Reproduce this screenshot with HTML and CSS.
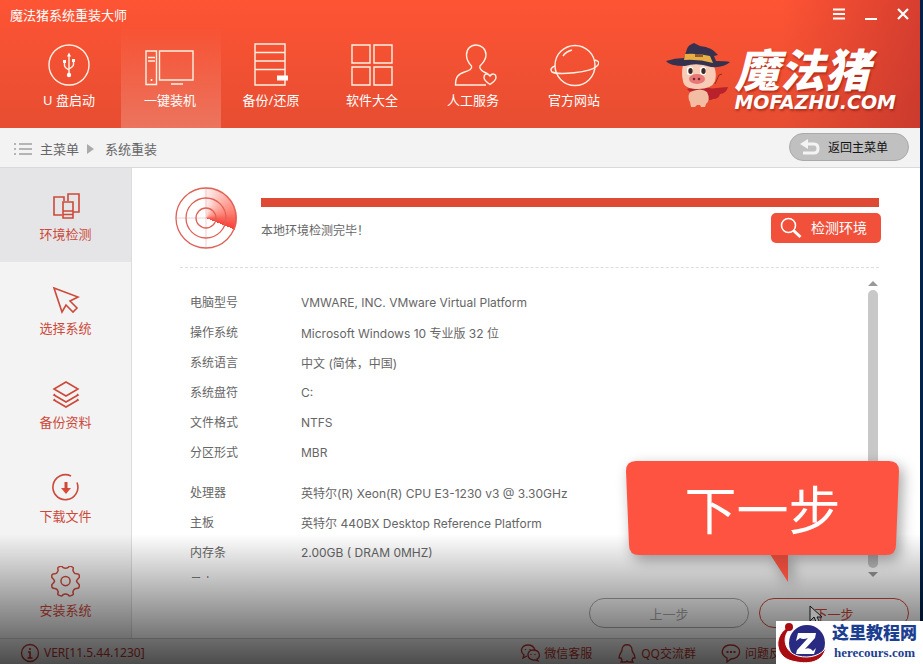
FILE: index.html
```html
<!DOCTYPE html>
<html lang="zh-CN">
<head>
    <meta charset="UTF-8">
    <meta name="viewport" content="width=device-width, initial-scale=1.0">
    <title>魔法猪系统重装大师</title>
    <link rel="stylesheet" href="styles.css">
</head>
<body>
<div class="window">

    <header class="header">
        <div class="titlebar">
            <span class="title">魔法猪系统重装大师</span>
            <div class="window-buttons">
                <button type="button" aria-label="菜单"><svg width="12" height="12" viewBox="0 0 12 12"><path d="M0 1.500h12M0 6h12M0 10.500h12" stroke-width="2"/></svg></button>
                <button type="button" aria-label="最小化"><svg width="12" height="12" viewBox="0 0 12 12"><path d="M0 11h12" stroke-width="2"/></svg></button>
                <button type="button" aria-label="关闭"><svg width="12" height="12" viewBox="0 0 12 12"><path d="M1 1l10 10M11 1L1 11" stroke-width="2.200"/></svg></button>
            </div>
        </div>
        <div class="header-main">
            <nav class="nav">
                <a href="#">
                    <svg width="50" height="44" viewBox="0 0 50 44"><circle cx="25" cy="22" r="20"/><path d="M25 13v18M20.500 19v3.500q0 2 4.500 4.500M29.500 18v3.500q0 2-4.500 4.500"/><path class="solid" d="M25 9.500l2 4h-4zM19 17h3v3h-3zM28 16h3v3h-3z"/><circle class="solid" cx="25" cy="32" r="2.200"/></svg>
                    <span>U 盘启动</span>
                </a>
                <a href="#" class="active">
                    <svg width="50" height="44" viewBox="0 0 50 44"><path d="M1 8h10.500v33.500H1zM3 14.500h7M3 18h7M14.500 8H48v29H14.500zM26 41h12"/><circle class="solid" cx="6.500" cy="37" r="1"/></svg>
                    <span>一键装机</span>
                </a>
                <a href="#">
                    <svg width="50" height="44" viewBox="0 0 50 44"><path d="M9 1h30v41H9zM9 9.500h30M9 18h30M9 26.500h30"/><path class="solid" d="M31 32.500h11v5H31z"/></svg>
                    <span>备份/还原</span>
                </a>
                <a href="#">
                    <svg width="50" height="44" viewBox="0 0 50 44"><path d="M5 2h18v18H5zM27 2h18v18H27zM5 24h18v18H5zM27 24h18v18H27z"/></svg>
                    <span>软件大全</span>
                </a>
                <a href="#">
                    <svg width="50" height="44" viewBox="0 0 50 44"><path d="M38 42H7.500c0-8 2.500-11 9-13 5-1.500 8-3 7-6-4-4-5-7-5-11 0-6 4-10 9.500-10s10 4 10 10c0 4-3 8-6 11-1 3 2 5 5 6.500l3 1.500"/><path d="M42 41.500c-3-2-6-4-6-7 0-4 4-4.500 6-1.500 2-3 6-2.500 6 1.500 0 3-3 5-6 7z"/></svg>
                    <span>人工服务</span>
                </a>
                <a href="#">
                    <svg width="50" height="44" viewBox="0 0 50 44"><circle cx="26" cy="22.500" r="20"/><path d="M6 23c-4 1-5 4-3 6 6 3 38 1 45-6 3-3 2-5-2-6M14 13c2-3 5-5 9-6"/></svg>
                    <span>官方网站</span>
                </a>
            </nav>
            <div class="brand">
                <svg class="pig" width="64" height="68" viewBox="0 0 64 68">
                    <path fill="#b9212b" d="M42 47q7-1 20-2-2 7-8 7-1 5-7 5-5 3-7-2zM21 47q12-5 26 0l-1 4-10-1-10 2z"/>
                    <path fill="none" stroke="#952e20" d="M49 42l4-9 3-1"/>
                    <path fill="#f3bda4" d="M24 50q11-5 17 0 4 8-1 12l-1 3h-4l-1-2h-3l-2 2h-4l-1-5q-3-5 0-10z"/>
                    <path fill="#f8cbb6" d="M17 23q2-4 15-4 14 0 16 5 3 8 1 15-3 8-17 8t-15-8q-2-8 0-16z"/>
                    <path fill="#fff" d="M21 26q3-3 6 0v6q-3 2-6 0zM34 26q3-3 6 0v6q-3 2-6 0z"/>
                    <ellipse cx="24.500" cy="29" rx="2.200" ry="3" fill="#3d2923"/><ellipse cx="37.500" cy="29" rx="2.200" ry="3" fill="#3d2923"/>
                    <ellipse cx="31" cy="37" rx="8" ry="5" fill="#e77875"/>
                    <circle cx="28" cy="37" r="1.300" fill="#7b2633"/><circle cx="33" cy="37" r="1.300" fill="#7b2633"/>
                    <path fill="#35314f" d="M0 19q9-3 18-3l3-9q1-4 7-6l6 3q12 1 18 9l-4 1 2 5q10 0 14 1-6 6-19 5-14-5-26-1Q3 24 0 19z"/>
                    <path fill="#e7ae46" d="M19 12q12-1 25 2l3 7q-14-4-29-3z"/>
                    <path fill="#8f5c31" d="M29 12h8v3h-8z"/>
                </svg>
                <div class="brand-text">
                    <strong class="brand-name">魔法猪</strong>
                    <span class="brand-url">MOFAZHU.COM</span>
                </div>
            </div>
        </div>
    </header>

    <div class="crumbs">
        <svg width="18" height="14" viewBox="0 0 18 14"><path d="M0 2h2M5 2h13M0 7h2M5 7h13M0 12h2M5 12h13" stroke="#b5b5b5" stroke-width="2"/></svg>
        <a href="#">主菜单</a>
        <svg width="8" height="10" viewBox="0 0 8 10"><path d="M0 0l7 5-7 5z" fill="#aaa"/></svg>
        <span>系统重装</span>
        <button type="button" class="back">
            <svg width="20" height="18" viewBox="0 0 20 18"><path d="M4 6h10q4 0 4 4.500t-4 4.500H3" fill="none" stroke="#f4f4f4" stroke-width="3"/><path d="M0 6l8-5v10z" fill="#f4f4f4"/></svg>
            返回主菜单
        </button>
    </div>

    <div class="body">
        <aside class="sidebar">
            <a href="#" class="active">
                <svg width="32" height="32" viewBox="0 0 32 32"><path d="M12 25H4V7h10v4M18 11V4h11v18h-6M13 12h10v16H13zM13 21h10M13 24.500h10"/></svg>
                环境检测
            </a>
            <a href="#">
                <svg width="32" height="32" viewBox="0 0 32 32"><path d="M4 4l24 9-8 4 7 7-4 4-7-7-4 7z"/></svg>
                选择系统
            </a>
            <a href="#">
                <svg width="32" height="32" viewBox="0 0 32 32"><path d="M16 4l12 7-12 7-12-7zM5 16l-1 1 12 7 12-7-1-1M5 21l-1 1 12 7 12-7-1-1"/></svg>
                备份资料
            </a>
            <a href="#">
                <svg width="32" height="32" viewBox="0 0 32 32"><path d="M21 4A12.500 12.500 0 1 0 27 10.500"/><path d="M11 16h10l-5 6z" fill="#dc4a36" stroke="none"/><path d="M16 10v8" stroke-width="3"/></svg>
                下载文件
            </a>
            <a href="#">
                <svg width="32" height="32" viewBox="-1 1 35 35"><path d="M10 1.500q2-1 3 1 3 2 6 0 1-2 3-1l2 1q1 1 0 3 1 4 4 4 3 0 3 2v2q-3 3-3 4 0 1 3 4v2q0 2-3 2-3 0-4 4 1 2 0 3l-2 1q-2 1-3-1-3-2-6 0-1 2-3 1l-2-1q-1-1 0-3-1-4-4-4-3 0-3-2v-2q3-3 3-4 0-1-3-4v-2q0-2 3-2 3 0 4-4-1-2 0-3z"/><circle cx="16" cy="17.500" r="5"/></svg>
                安装系统
            </a>
        </aside>

        <main class="main">
            <section class="check">
                <div class="radar">
                    <svg width="62" height="62" viewBox="0 0 62 62"><g fill="none" stroke="#dd6257" stroke-width="1.300"><circle cx="31" cy="31" r="30"/><circle cx="31" cy="31" r="20"/><circle cx="31" cy="31" r="10"/></g><path d="M31 1v60M1 31h60" stroke="#c66" stroke-width=".3"/></svg>
                </div>
                <div class="check-info">
                    <div class="progress"></div>
                    <div class="check-row">
                        <span>本地环境检测完毕！</span>
                        <button type="button" class="detect">
                            <svg width="22" height="22" viewBox="0 0 22 22"><circle cx="8.500" cy="8.500" r="7" fill="none" stroke="#fff" stroke-width="1.600"/><path d="M13.500 13.500l7 6.500" stroke="#fff" stroke-width="3"/></svg>
                            检测环境
                        </button>
                    </div>
                </div>
            </section>

            <section class="details">
                <div class="table-wrap">
                    <table>
                        <tbody>
                            <tr><th>电脑型号</th><td>VMWARE, INC. VMware Virtual Platform</td></tr>
                            <tr><th>操作系统</th><td>Microsoft Windows 10 专业版 32 位</td></tr>
                            <tr><th>系统语言</th><td>中文 (简体，中国)</td></tr>
                            <tr><th>系统盘符</th><td>C:</td></tr>
                            <tr><th>文件格式</th><td>NTFS</td></tr>
                            <tr><th>分区形式</th><td>MBR</td></tr>
                        </tbody>
                        <tbody class="hardware">
                            <tr><th>处理器</th><td>英特尔(R) Xeon(R) CPU E3-1230 v3 @ 3.30GHz</td></tr>
                            <tr><th>主板</th><td>英特尔 440BX Desktop Reference Platform</td></tr>
                            <tr><th>内存条</th><td>2.00GB ( DRAM 0MHZ)</td></tr>
                            <tr><th>显卡</th><td></td></tr>
                        </tbody>
                    </table>
                </div>
                <div class="scrollbar">
                    <svg width="12" height="6" viewBox="0 0 12 6"><path d="M1 6l5-5 5 5z"/></svg>
                    <div class="thumb"></div>
                    <svg width="12" height="6" viewBox="0 0 12 6"><path d="M1 0l5 5 5-5z"/></svg>
                </div>
            </section>

            <div class="steps">
                <button type="button" class="prev" disabled>上一步</button>
                <button type="button" class="next">下一步</button>
            </div>
        </main>
    </div>

    <footer class="footer">
        <span class="version">
            <svg width="20" height="20" viewBox="0 0 20 20"><circle cx="10" cy="10" r="8.500"/><path d="M10 5v2M8 9h2v6M7.500 15h5" stroke-width="1.600"/></svg>
            VER[11.5.44.1230]
        </span>
        <a href="#">
            <svg width="20" height="20" viewBox="0 0 20 20"><path d="M7 13l-4 2 1-3C-1 8 2 2 8 2c4 0 6 2 7 5"/><path d="M13 7c7 0 8 7 4 9l1 2-3-1c-9 1-9-10-2-10z"/><path d="M5.500 6v1M10 6v1M11 11v1M15 11v1"/></svg>
            微信客服
        </a>
        <a href="#">
            <svg width="20" height="20" viewBox="0 0 20 20"><path d="M5 7c0-7 10-7 10 0 0 2 3 4 3 8l-2 0-1 2 1 2h-5l-1-1-1 1H4l1-2-1-2-2 0c0-4 3-6 3-8z"/></svg>
            QQ交流群
        </a>
        <a href="#">
            <svg width="20" height="20" viewBox="0 0 20 20"><path d="M10 2c12 0 11 14 0 14l-4 3v-4C-2 11 1 2 10 2z"/><path d="M5.500 9h2M9 9h2M12.500 9h2" stroke-width="2"/></svg>
            问题反馈
        </a>
    </footer>
</div>

<div class="shade"></div>

<div class="callout">
    <svg width="273" height="122" viewBox="0 0 273 122"><defs><linearGradient id="tail" x1="0" y1="0" x2="0" y2="1"><stop offset="0" stop-color="#c94234"/><stop offset="1" stop-color="#ed4e3c"/></linearGradient></defs><path fill="url(#tail)" d="M142 90l20 31V90z"/><path fill="#ff5341" d="M10 0h253q10 0 10 10l-3 74q0 10-10 10H13q-10 0-10-10L0 10Q0 0 10 0z"/></svg>
    <span>下一步</span>
</div>

<svg class="cursor" width="14" height="20" viewBox="0 0 14 20"><path d="M1 1v15l4-4 3 7 3-1-3-6h5z" fill="#aaa" stroke="#111"/></svg>

<div class="watermark">
    <svg width="52" height="43" viewBox="0 0 52 43">
        <circle cx="31" cy="22" r="18" fill="#292b83"/>
        <path d="M14 5C-4 14-1 36 16 40 32 44 47 42 50 26 46 34 34 38 22 35 8 31 5 15 15 7z" fill="#a80d12" stroke="#fff"/>
        <circle cx="13" cy="6" r="4" fill="#a80d12"/>
        <path d="M22 12h18l-1 5-10 11q5-2 8 2l3-3-2 6H20l1-4 11-12q-5 2-8 0l-4 3z" fill="#fff"/>
    </svg>
    <div class="watermark-text">
        <strong>这里教程网</strong>
        <span>herecours.com</span>
    </div>
</div>
</body>
</html>
```
FILE: styles.css
```css
* {
    box-sizing: border-box;
}
body {
    margin: 0;
    min-height: 100vh;
    position: relative;
    overflow: hidden;
    display: flex;
    padding-right: 3px;
    background: #04234a;
    font-family: "Noto Sans", "Noto Sans CJK SC", sans-serif;
    font-size: 12px;
    color: #666;
}
a {
    color: inherit;
    text-decoration: none;
}
button {
    font: inherit;
    cursor: pointer;
}
.window {
    flex: 1;
    display: flex;
    flex-direction: column;
    background: #fff;
}

/* header */
.header {
    height: 128px;
    color: #fff;
    background: linear-gradient(to right, transparent 85%, rgba(160, 30, 40, 0.4)), linear-gradient(#fd5434, #e74d31);
}
.titlebar {
    display: flex;
    justify-content: space-between;
    align-items: center;
    height: 28px;
    padding: 0 11px 0 10px;
    font-size: 13px;
}
.window-buttons {
    display: flex;
    gap: 20px;
}
.window-buttons button {
    display: flex;
    padding: 0;
    border: 0;
    background: none;
}
.window-buttons svg {
    stroke: #fff;
}
.header-main {
    display: flex;
    justify-content: space-between;
    height: 100px;
    padding: 0 24px 0 20px;
}
.nav {
    display: flex;
    gap: 1px;
}
.nav a {
    width: 100px;
    padding: 15px 2px 0 0;
    display: flex;
    flex-direction: column;
    align-items: center;
    gap: 3px;
    font-size: 13px;
    line-height: 20px;
}
.nav a.active {
    background: linear-gradient(rgba(255, 255, 255, 0), rgba(255, 255, 255, 0.22));
}
.nav svg {
    fill: none;
    stroke: #fff1e4;
    stroke-width: 1.4;
}
.nav .solid {
    fill: #fff;
    stroke: none;
}
.brand {
    display: flex;
    gap: 4px;
    padding-top: 14px;
}
.brand-text {
    display: flex;
    flex-direction: column;
    padding-top: 5px;
    font-style: italic;
    text-shadow: 1px 2px 2px rgba(130, 20, 10, 0.5);
}
.brand-name {
    font-size: 45px;
    font-weight: 900;
    line-height: 45px;
}
.brand-url {
    font-family: "DejaVu Sans", sans-serif;
    font-size: 19px;
    font-weight: bold;
    line-height: 20px;
}

/* breadcrumbs */
.crumbs {
    height: 40px;
    display: flex;
    align-items: center;
    gap: 8px;
    padding: 2px 11px 0 14px;
    background: #f3f3f3;
    border-bottom: 1px solid #d9d9db;
    font-size: 13px;
}
.crumbs span {
    margin-left: 2px;
}
.back {
    width: 120px;
    height: 28px;
    margin: 0 0 4px auto;
    padding: 0 0 0 10px;
    display: flex;
    align-items: center;
    gap: 8px;
    border: 1px solid #aaa;
    border-radius: 14px;
    background: #c0c0c1;
    color: #111;
    font-size: 12px;
}

.body {
    flex: 1;
    display: flex;
}

/* sidebar */
.sidebar {
    width: 132px;
    background: #f3f3f4;
    border-right: 1px solid #dcdcdc;
}
.sidebar a {
    height: 94px;
    padding-top: 22px;
    display: flex;
    flex-direction: column;
    align-items: center;
    gap: 2px;
    color: #cd4939;
    font-size: 13px;
    line-height: 20px;
}
.sidebar a.active {
    background: #e5e5e7;
}
.sidebar svg {
    fill: none;
    stroke: #cd4939;
    stroke-width: 1.6;
}

/* main */
.main {
    flex: 1;
    display: flex;
    flex-direction: column;
    padding: 19px 11px 10px 43px;
}
.check {
    display: flex;
    gap: 24px;
    margin-right: 30px;
}
.radar {
    width: 62px;
    height: 62px;
    border-radius: 50%;
    background: conic-gradient(from -10deg, #fff 0deg, #ff8d80 80deg, #fb3f35 122deg, transparent 122deg);
}
.check-info {
    flex: 1;
    padding-top: 11px;
}
.progress {
    height: 9px;
    background: #df4a34;
}
.check-row {
    display: flex;
    justify-content: space-between;
    align-items: flex-end;
    margin: 6px -2px 0 0;
    line-height: 24px;
}
.detect {
    width: 110px;
    height: 30px;
    padding: 0 0 0 9px;
    display: flex;
    align-items: center;
    gap: 9px;
    border: 0;
    border-radius: 5px;
    background: #f1503a;
    color: #fff;
    font-size: 14px;
}
.details {
    flex: 1 1 0;
    min-height: 120px;
    display: flex;
    margin: 18px 30px 20px 5px;
    padding-top: 10px;
    border-top: 1px dashed #ddd;
}
.table-wrap {
    flex: 1;
    height: 300px;
    padding: 9px 0 0 10px;
    overflow: hidden;
}
table {
    border-collapse: collapse;
}
th,
td {
    height: 30px;
    padding: 0;
    font-weight: normal;
    text-align: left;
}
th {
    width: 111px;
}
td {
    font-family: Inter, "Noto Sans CJK SC", sans-serif;
}
.hardware::before {
    content: "";
    display: block;
    height: 10px;
}
.scrollbar {
    width: 12px;
    display: flex;
    flex-direction: column;
    gap: 4px;
    padding-top: 2px;
}
.scrollbar svg {
    fill: #999;
}
.thumb {
    flex: 1;
    margin: 0 1px;
    border-radius: 5px;
    background: #c8c8c8;
}
.steps {
    display: flex;
    justify-content: flex-end;
    gap: 10px;
}
.steps button {
    height: 30px;
    border-radius: 15px;
    background: none;
    font-size: 13px;
}
.prev {
    width: 160px;
    border: 1px solid #aaa;
    color: #aaa;
}
.next {
    width: 150px;
    border: 1px solid #d5473a;
    color: #d5473a;
}

/* footer */
.footer {
    height: 26px;
    display: flex;
    align-items: center;
    gap: 25px;
    padding: 2px 127px 0 20px;
    background: #eee;
    border-top: 1px solid #ccc;
    color: #b9342b;
}
.footer svg {
    fill: none;
    stroke: #b9342b;
    stroke-width: 1.3;
}
.footer a,
.version {
    display: flex;
    align-items: center;
    gap: 4px;
}
.version {
    margin-right: auto;
}

/* layers over the window */
.shade {
    position: absolute;
    left: 0;
    right: 0;
    bottom: 0;
    height: 130px;
    background: linear-gradient(rgba(0, 0, 0, 0), rgba(0, 0, 0, 0.68));
    pointer-events: none;
}
.callout {
    position: absolute;
    right: 24px;
    bottom: 81px;
    color: #fff;
    font-size: 52px;
    line-height: 94px;
    text-align: center;
}
.callout svg {
    display: block;
    filter: drop-shadow(4px 5px 7px rgba(0, 0, 0, 0.35));
}
.callout span {
    position: absolute;
    top: 2px;
    left: 0;
    right: 0;
}
.cursor {
    position: absolute;
    right: 100px;
    bottom: 39px;
}
.watermark {
    position: absolute;
    right: 0;
    bottom: 0;
    width: 147px;
    height: 43px;
    display: flex;
    gap: 4px;
    background: #fff;
    color: #1d3f91;
}
.watermark-text {
    font-family: "Liberation Serif", "Noto Sans CJK SC", serif;
    text-align: center;
    font-weight: bold;
}
.watermark strong {
    display: block;
    font-size: 17px;
    line-height: 25px;
}
.watermark span {
    display: block;
    font-size: 13px;
    line-height: 13px;
}
```
